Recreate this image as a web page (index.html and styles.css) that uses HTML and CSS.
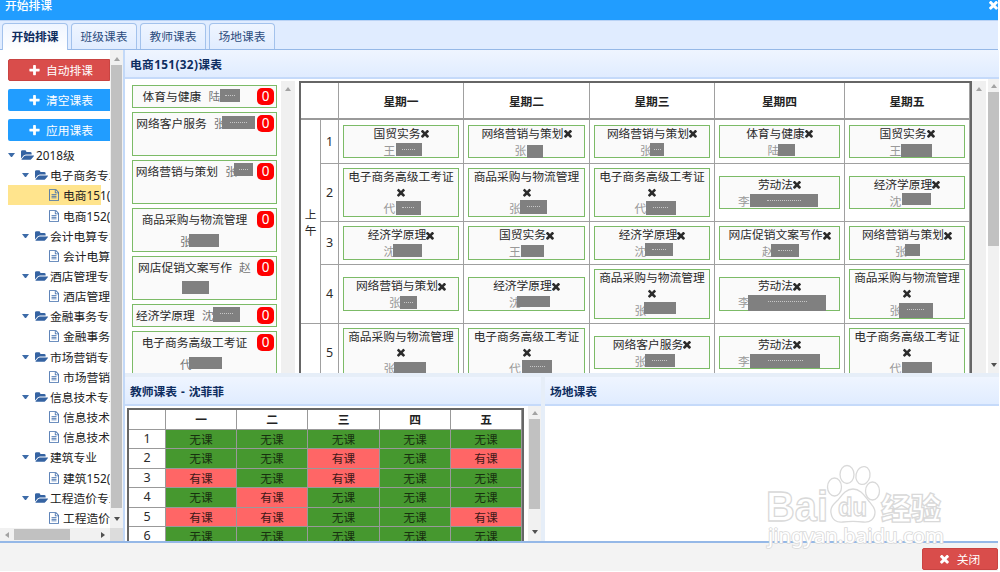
FILE: index.html
```html
<!DOCTYPE html>
<html lang="zh-CN">
<head>
    <meta charset="UTF-8">
    <title>开始排课</title>
    <link rel="stylesheet" href="styles.css">
</head>
<body>
    <svg class="symbols">
        <symbol id="i-plus" viewBox="0 0 1792 1792"><path d="M1600 736v192q0 40-28 68t-68 28h-416v416q0 40-28 68t-68 28h-192q-40 0-68-28t-28-68v-416h-416q-40 0-68-28t-28-68v-192q0-40 28-68t68-28h416v-416q0-40 28-68t68-28h192q40 0 68 28t28 68v416h416q40 0 68 28t28 68z"/></symbol>
        <symbol id="i-x" viewBox="300 380 1200 1200"><path d="M1490 1322q0 40-28 68l-136 136q-28 28-68 28t-68-28l-294-294-294 294q-28 28-68 28t-68-28l-136-136q-28-28-28-68t28-68l294-294-294-294q-28-28-28-68t28-68l136-136q28-28 68-28t68 28l294 294 294-294q28-28 68-28t68 28l136 136q28 28 28 68t-28 68l-294 294 294 294q28 28 28 68z"/></symbol>
        <symbol id="i-folder" viewBox="0 128 1879 1408"><path d="M1879 952q0 31-31 66l-336 396q-43 51-120.5 86.5t-143.5 35.5h-1088q-34 0-60.5-13t-26.5-43q0-31 31-66l336-396q43-51 120.5-86.5t143.5-35.5h1088q34 0 60.5 13t26.5 43zm-343-344v160h-832q-94 0-197 47.5t-164 119.5l-337 396-5 6q0-4-.5-12.5t-.5-12.5v-960q0-92 66-158t158-66h320q92 0 158 66t66 158v32h544q92 0 158 66t66 158z"/></symbol>
        <symbol id="i-file" viewBox="128 0 1536 1792"><path d="M1596 380q28 28 48 76t20 88v1152q0 40-28 68t-68 28h-1344q-40 0-68-28t-28-68v-1600q0-40 28-68t68-28h896q40 0 88 20t76 48zm-444-244v376h376q-10-29-22-41l-313-313q-12-12-41-22zm384 1528v-1024h-416q-40 0-68-28t-28-68v-416h-768v1536h1280zm-1024-864q0-14 9-23t23-9h704q14 0 23 9t9 23v64q0 14-9 23t-23 9h-704q-14 0-23-9t-9-23v-64zm736 224q14 0 23 9t9 23v64q0 14-9 23t-23 9h-704q-14 0-23-9t-9-23v-64q0-14 9-23t23-9h704zm0 256q14 0 23 9t9 23v64q0 14-9 23t-23 9h-704q-14 0-23-9t-9-23v-64q0-14 9-23t23-9h704z"/></symbol>
    </svg>

    <div class="window">
        <div class="titlebar">
            <span>开始排课</span>
            <svg class="icon"><use href="#i-x"/></svg>
        </div>
        <div class="tabs">
            <div class="tab active">开始排课</div>
            <div class="tab">班级课表</div>
            <div class="tab">教师课表</div>
            <div class="tab">场地课表</div>
        </div>

        <div class="main">
            <div class="west">
                <div class="west-top">
                    <div class="west-body">
                        <div class="btn btn-red"><svg class="icon"><use href="#i-plus"/></svg>自动排课</div>
                        <div class="btn"><svg class="icon"><use href="#i-plus"/></svg>清空课表</div>
                        <div class="btn"><svg class="icon"><use href="#i-plus"/></svg>应用课表</div>
                        <div class="tree" id="tree"></div>
                    </div>
                    <div class="vscroll">
                        <i class="arrow up"></i><b class="thumb"></b><i class="arrow down"></i>
                    </div>
                </div>
                <div class="hscroll">
                    <div class="track"><i class="arrow left"></i><b class="thumb"></b><i class="arrow right"></i></div>
                </div>
            </div>

            <div class="center">
                <div class="panel panel-top">
                    <div class="panel-header">电商151(32)课表</div>
                    <div class="panel-body">
                        <div class="courses" id="courses"></div>
                        <div class="vscroll flat"><i class="arrow up"></i></div>
                        <div class="timetable" id="timetable"></div>
                        <div class="vscroll flat"><i class="arrow up"></i></div>
                        <div class="vscroll outer"><i class="arrow up"></i><b class="thumb"></b><i class="arrow down"></i></div>
                    </div>
                </div>
                <div class="bottom">
                    <div class="panel panel-teacher">
                        <div class="panel-header">教师课表 - 沈菲菲</div>
                        <div class="panel-body">
                            <div class="teacher" id="teacher"></div>
                            <div class="vscroll"><i class="arrow up"></i><b class="thumb"></b><i class="arrow down"></i></div>
                        </div>
                    </div>
                    <div class="panel panel-room">
                        <div class="panel-header">场地课表</div>
                        <div class="panel-body"></div>
                    </div>
                </div>
            </div>
        </div>

        <div class="footer">
            <div class="btn btn-red close"><svg class="icon"><use href="#i-x"/></svg>关闭</div>
        </div>

        <svg class="watermark" width="190" height="90" viewBox="0 0 190 90">
            <g class="paw">
                <ellipse cx="74.500" cy="27" rx="7" ry="9"/>
                <ellipse cx="87" cy="14.500" rx="7" ry="9"/>
                <ellipse cx="103" cy="15.500" rx="7" ry="9" transform="rotate(12 103 15.500)"/>
                <ellipse cx="112.500" cy="31" rx="7" ry="9"/>
                <path d="M93 29c-7 0-11 6-15 11-4 4-8 7-7 13 1 7 6 10 12 9 7-1 13-1 20 0 7 1 12-3 12-10 0-5-4-8-7-12-4-5-8-11-15-11z"/>
            </g>
            <text x="6" y="60.500" class="wm-bai" textLength="62" lengthAdjust="spacingAndGlyphs">Bai</text>
            <text x="78" y="56" class="wm-du" textLength="29" lengthAdjust="spacingAndGlyphs">du</text>
            <text x="121" y="59" class="wm-cn">经验</text>
            <text x="8" y="83" class="wm-url" textLength="176" lengthAdjust="spacingAndGlyphs">jingyan.baidu.com</text>
        </svg>
    </div>

    <script>
        // level, text
        const tree = [
            [0, '2018级'],
            [1, '电子商务专业'], [2, '电商151(32)'], [2, '电商152(30)'],
            [1, '会计电算专业'], [2, '会计电算151'],
            [1, '酒店管理专业'], [2, '酒店管理151'],
            [1, '金融事务专业'], [2, '金融事务151'],
            [1, '市场营销专业'], [2, '市场营销151'],
            [1, '信息技术专业'], [2, '信息技术151'], [2, '信息技术152'],
            [1, '建筑专业'], [2, '建筑152(30)'],
            [1, '工程造价专业'], [2, '工程造价151']
        ];

        // title, surname, name width, mask [left, top, width, height, lined]
        const courses = [
            ['体育与健康', '陆', 38, [12, 1, 20, 13, 1]],
            ['网络客户服务', '张', 39, [8, 1, 33, 13, 1]],
            ['网络营销与策划', '张', 28, [9, 0, 19, 13, 1]],
            ['商品采购与物流管理', '张', 29, [9, 1, 30, 13, 0]],
            ['网店促销文案写作', '赵', 12, [-57, 22, 27, 13, 0]],
            ['经济学原理', '沈', 51, [11, 0, 27, 15, 1]],
            ['电子商务高级工考证', '代', 29, [9, 1, 33, 12, 0]]
        ];

        const timetable = [
            [['国贸实务', '王', 35, [12, 1, 26, 13, 1]], ['网络营销与策划', '张', 24, [12, 3, 16, 13, 0]], ['网络营销与策划', '张', 24, [10, 1, 14, 13, 1]], ['体育与健康', '陆', 24, [10, 2, 17, 12, 0]], ['国贸实务', '王', 35, [11, 2, 31, 13, 0]]],
            [['电子商务高级工考证', '代', 35, [12, 1, 25, 14, 1]], ['商品采购与物流管理', '张', 35, [11, 0, 27, 14, 1]], ['电子商务高级工考证', '代', 35, [11, 1, 30, 14, 1]], ['劳动法', '李', 83, [12, 1, 68, 13, 1]], ['经济学原理', '沈', 35, [12, 0, 29, 12, 0]]],
            [['经济学原理', '沈', 35, [9, 1, 29, 13, 0]], ['国贸实务', '王', 35, [12, 2, 23, 12, 0]], ['经济学原理', '沈', 35, [10, 0, 28, 13, 1]], ['网店促销文案写作', '赵', 35, [9, 1, 28, 13, 1]], ['网络营销与策划', '张', 24, [10, 1, 15, 12, 0]]],
            [['网络营销与策划', '张', 24, [11, 2, 17, 13, 1]], ['经济学原理', '沈', 35, [8, 2, 33, 11, 0]], ['商品采购与物流管理', '张', 35, [9, 0, 32, 12, 0]], ['劳动法', '李', 83, [10, 1, 78, 16, 1]], ['商品采购与物流管理', '张', 35, [9, 1, 34, 15, 1]]],
            [['商品采购与物流管理', '张', 35, [10, 2, 32, 13, 0]], ['电子商务高级工考证', '代', 35, [13, 0, 30, 14, 1]], ['网络客户服务', '张', 35, [10, 1, 30, 13, 1]], ['劳动法', '李', 83, [12, 1, 70, 14, 1]], ['电子商务高级工考证', '代', 35, [12, 2, 30, 13, 0]]]
        ];

        // 1 = 有课, 0 = 无课
        const teacher = ['00000', '00101', '10100', '01000', '11001', '00000'];

        function person(name, width, m) {
            return `<span class="person" style="width:${width}px">${name}<i class="mask${m[4] ? ' lined' : ''}" style="left:${m[0]}px;top:${m[1]}px;width:${m[2]}px;height:${m[3]}px"></i></span>`;
        }

        document.getElementById('tree').innerHTML = tree.map(([level, text], i) =>
            `<div class="node level${level}${i === 2 ? ' selected' : ''}">` +
            (level < 2 ? '<i class="caret"></i><svg class="icon folder"><use href="#i-folder"/></svg>' : '<svg class="icon file"><use href="#i-file"/></svg>') +
            `<span>${text}</span></div>`).join('');

        document.getElementById('courses').innerHTML = courses.map((c, i) =>
            `<div class="course${[0, 5].includes(i) ? '' : ' tall'}">` +
            `<div class="course-text"><span class="name">${c[0]}</span> ${person(c[1], c[2], c[3])}</div>` +
            `<span class="badge">0</span></div>`).join('');

        let html = '<div class="th corner"></div>';
        html += ['一', '二', '三', '四', '五'].map(d => `<div class="th">星期${d}</div>`).join('');
        html += '<div class="half">上<br>午</div>';
        timetable.forEach((row, i) => {
            if (i === 4) html += '<div class="td"></div>';
            html += `<div class="td num">${i + 1}</div>`;
            html += row.map(c =>
                `<div class="td"><div class="lesson"><div class="name${c[0].length > 8 ? ' long' : ''}">${c[0]}<svg class="icon"><use href="#i-x"/></svg></div>` +
                `<div class="line">${person(c[1], c[2], c[3])}</div></div></div>`).join('');
        });
        document.getElementById('timetable').innerHTML = html;

        html = '<div></div>' + ['一', '二', '三', '四', '五'].map(d => `<div class="head">${d}</div>`).join('');
        teacher.forEach((row, i) => {
            html += `<div class="num">${i + 1}</div>`;
            html += [...row].map(v => v === '1' ? '<div class="busy">有课</div>' : '<div class="free">无课</div>').join('');
        });
        document.getElementById('teacher').innerHTML = html;
    </script>
</body>
</html>
```
FILE: styles.css
```css
* {
    box-sizing: border-box;
}
body {
    margin: 0;
    width: 1000px;
    height: 572px;
    overflow: hidden;
    background: #fff;
    font-family: "Noto Sans", "Noto Sans CJK SC", sans-serif;
    font-size: 11.75px;
    line-height: 16px;
    color: #2b2b2b;
    white-space: nowrap;
}
.symbols {
    display: none;
}
.icon {
    width: 9px;
    height: 9px;
    fill: currentColor;
    flex: none;
}
.window {
    position: relative;
    width: 998px;
    height: 571px;
    display: flex;
    flex-direction: column;
}
.titlebar {
    height: 20px;
    flex: none;
    display: flex;
    justify-content: space-between;
    background: #219dff;
    color: #fff;
    font-weight: 500;
    line-height: 10px;
    padding-left: 5px;
}
.titlebar .icon {
    margin-top: 1px;
}

/* tabs */
.tabs {
    height: 30px;
    flex: none;
    display: flex;
    align-items: flex-end;
    gap: 3px;
    padding-left: 2px;
    background: #e0ecff;
    border-top: 1px solid #b9d2f5;
    border-bottom: 1px solid #95b8e7;
}
.tab {
    width: 66px;
    height: 26px;
    line-height: 25px;
    text-align: center;
    color: #2b4a7c;
    border: 1px solid #a3c2ec;
    border-bottom: 0;
    border-radius: 4px 4px 0 0;
    background: linear-gradient(#eff5ff, #e0ecff);
}
.tab.active {
    height: 27px;
    margin-bottom: -1px;
    font-weight: bold;
    color: #0e2d5f;
    background: linear-gradient(#eff5ff, #fff);
}

.main {
    height: 491px;
    flex: none;
    display: flex;
}

/* left side */
.west {
    width: 123px;
    flex: none;
    display: flex;
    flex-direction: column;
}
.west-top {
    height: 478px;
    display: flex;
}
.west-body {
    width: 110px;
    overflow: hidden;
    padding: 9px 0 0 8px;
}
.btn {
    width: 102px;
    height: 22px;
    margin-bottom: 8px;
    display: flex;
    align-items: center;
    justify-content: center;
    gap: 5px;
    padding-left: 3px;
    color: #fff;
    background: #219dff;
    border-radius: 2px 0 0 2px;
}
.btn .icon {
    width: 13px;
    height: 13px;
}
.btn-red {
    background: #d94d4b;
    border: 1px solid #c94442;
}
.tree {
    margin-top: -4px;
}
.node {
    height: 20.17px;
    display: flex;
    align-items: center;
    color: #222;
}
.level1 {
    padding-left: 14px;
}
.level2 {
    padding-left: 41px;
}
.node.selected {
    background: linear-gradient(#ffe48d, #ffe48d) no-repeat 0 0 / 93px 100%;
}
.caret {
    flex: none;
    width: 7px;
    margin-right: 6px;
    border: 3.5px solid transparent;
    border-top: 4px solid #3c6ba8;
    border-bottom: 0;
}
.folder {
    width: 13px;
    height: 10px;
    margin-right: 2px;
    color: #3563a2;
}
.file {
    width: 10px;
    height: 12px;
    margin-right: 4px;
    color: #3f6cab;
}

/* scrollbars */
.vscroll {
    width: 13px;
    flex: none;
    display: flex;
    flex-direction: column;
    align-items: center;
    background: #f1f1f1;
    padding: 7px 0;
}
.vscroll .thumb {
    width: 11px;
    height: 443px;
    margin-top: 4px;
    background: #c1c1c1;
}
.arrow {
    border: 3px solid transparent;
}
.arrow.up {
    border-top: 0;
    border-bottom: 4px solid #a3a3a3;
}
.arrow.down {
    margin-top: auto;
    border-bottom: 0;
    border-top: 4px solid #505050;
}
.arrow.left {
    border-left: 0;
    border-right: 4px solid #a3a3a3;
}
.arrow.right {
    border-right: 0;
    border-left: 4px solid #505050;
    margin-left: auto;
}
.hscroll {
    height: 13px;
    background: #dcdcdc;
}
.track {
    width: 110px;
    height: 13px;
    display: flex;
    align-items: center;
    padding: 0 5px;
    background: #f1f1f1;
}
.track .thumb {
    width: 56px;
    height: 11px;
    margin-left: 5px;
    background: #c1c1c1;
}

/* panels */
.center {
    flex: 1;
    border-left: 2px solid #c3d9f8;
    display: flex;
    flex-direction: column;
}
.panel {
    display: flex;
    flex-direction: column;
    overflow: hidden;
}
.panel-header {
    height: 29px;
    flex: none;
    padding-left: 5px;
    line-height: 28px;
    font-weight: bold;
    word-spacing: 1px;
    color: #0e2d5f;
    background: linear-gradient(#eff5ff, #e0ecff);
    border-bottom: 2px solid #c5dafa;
}
.panel-top .panel-header {
    letter-spacing: 0.350px;
}
.panel-body {
    flex: 1;
    min-height: 0;
    display: flex;
    align-items: flex-start;
    overflow: hidden;
}
.panel-top {
    height: 323px;
    flex: none;
}

.courses {
    width: 152px;
    margin-right: 4px;
    padding: 6px 0 0 7px;
}
.course {
    width: 145px;
    height: 23px;
    margin-bottom: 4px;
    display: flex;
    align-items: flex-start;
    border: 1px solid #7cbb67;
    background: #fafafa;
}
.course.tall {
    height: 44px;
}
.course-text {
    width: 123px;
    line-height: 21.500px;
    text-align: center;
    white-space: normal;
}
.course .name {
    margin-right: 4px;
}
.course.tall:nth-child(4) .name,
.course.tall:nth-child(7) .name {
    margin-right: 0;
}
.person {
    position: relative;
    display: inline-block;
    line-height: 16px;
    text-align: left;
    color: #777;
}
.mask {
    position: absolute;
    background: #808080;
}
.mask.lined::after {
    content: "";
    display: block;
    width: 50%;
    margin: 6px auto 0;
    border-top: 1px dotted #c8c8c8;
}
.badge {
    width: 17px;
    height: 17px;
    margin: 2px 0 0 1px;
    border-radius: 5px;
    background: #f00;
    color: #fff;
    font-size: 13.500px;
    line-height: 16px;
    text-align: center;
}
.vscroll.flat {
    width: 14px;
    height: 294px;
    margin-top: 2px;
    padding-top: 6px;
    background: #f0f0f0;
}
.vscroll.outer {
    width: 11px;
    height: 294px;
    margin-left: 2px;
    padding: 5px 0 6px;
    overflow: hidden;
}
.vscroll.outer .thumb {
    height: 154px;
    margin-top: 4px;
}

/* class timetable */
.timetable {
    width: 673px;
    margin: 2px 0 0 4px;
    flex: none;
    display: grid;
    grid-template-columns: 20px 18px 125px 126px 125px 130px 125px;
    grid-template-rows: 37px 44px 58px 43px 59px 58px;
    border: 2px solid #666;
    background: #fff;
}
.th,
.td,
.half {
    display: flex;
    align-items: center;
    justify-content: center;
    border-right: 1px solid #a0a0a0;
    border-bottom: 1px solid #a0a0a0;
}
.th {
    font-weight: bold;
    color: #222;
    border-bottom: 2px solid #9a9a9a;
}
.corner {
    grid-column: span 2;
}
.half {
    grid-row: span 4;
}
.num {
    font-size: 12.500px;
}
.lesson {
    flex: 1;
    margin: 0 4px;
    border: 1px solid #7cbb67;
    background: #fafafa;
    text-align: center;
    line-height: 15.900px;
}
.lesson .icon {
    width: 8px;
    height: 8px;
    vertical-align: -0.500px;
}
.lesson .long .icon {
    display: block;
    margin: 0 auto;
    height: 15.900px;
}
.lesson .person {
    display: block;
    margin: 0 auto;
    color: #999;
}
.lesson .name,
.lesson .line {
    height: 15.900px;
}
.lesson .long {
    height: 31.800px;
}

/* bottom row */
.bottom {
    flex: 1;
    min-height: 0;
    display: flex;
    gap: 4px;
    padding-top: 4px;
    background: #e6eef8;
}
.bottom .panel-body {
    background: #fff;
}
.panel-teacher {
    width: 416px;
}
.panel-room {
    flex: 1;
}
.teacher {
    width: 397px;
    margin: 2px 5px 0 2px;
    flex: none;
    display: grid;
    grid-template-columns: 37px 71px 71px 72px 71px 71px;
    grid-template-rows: 20px;
    grid-auto-rows: 19.400px;
    border: 2px solid #666;
}
.teacher > div {
    line-height: 18.400px;
    text-align: center;
    border-right: 1px solid #999;
    border-bottom: 1px solid #999;
}
.teacher .head {
    font-weight: bold;
    color: #222;
}
.teacher .free {
    background: #46982f;
    color: #17300f;
}
.teacher .busy {
    background: #ff6666;
    color: #401818;
}
.panel-teacher .vscroll {
    height: 135px;
    margin-left: -1px;
    padding-top: 5px;
}
.panel-teacher .thumb {
    height: 90px;
}

.footer {
    height: 30px;
    flex: none;
    display: flex;
    justify-content: flex-end;
    border-top: 2px solid #95b8e7;
    background: #f3f3f3;
}
.close {
    width: 76px;
    margin: 5px 0 0;
    padding-left: 0;
    gap: 8px;
    border-radius: 2px;
}
.close .icon {
    width: 9px;
    height: 9px;
}

/* site mark over the lower right corner */
.watermark {
    position: absolute;
    left: 760px;
    top: 460px;
    fill: #fff;
    stroke: #d9d9d9;
    stroke-width: 1.3px;
}
.watermark text {
    font-family: "Noto Sans", "Noto Sans CJK SC", sans-serif;
    font-weight: bold;
}
.watermark .wm-bai {
    font-family: "Liberation Sans", sans-serif;
    font-size: 42px;
}
.watermark .wm-du {
    font-family: "Liberation Sans", sans-serif;
    font-size: 26px;
}
.watermark .wm-cn {
    font-size: 30px;
    font-weight: 900;
}
.watermark .wm-url {
    font-size: 19px;
    font-weight: normal;
    stroke-width: 1.600px;
    paint-order: stroke;
}
```
